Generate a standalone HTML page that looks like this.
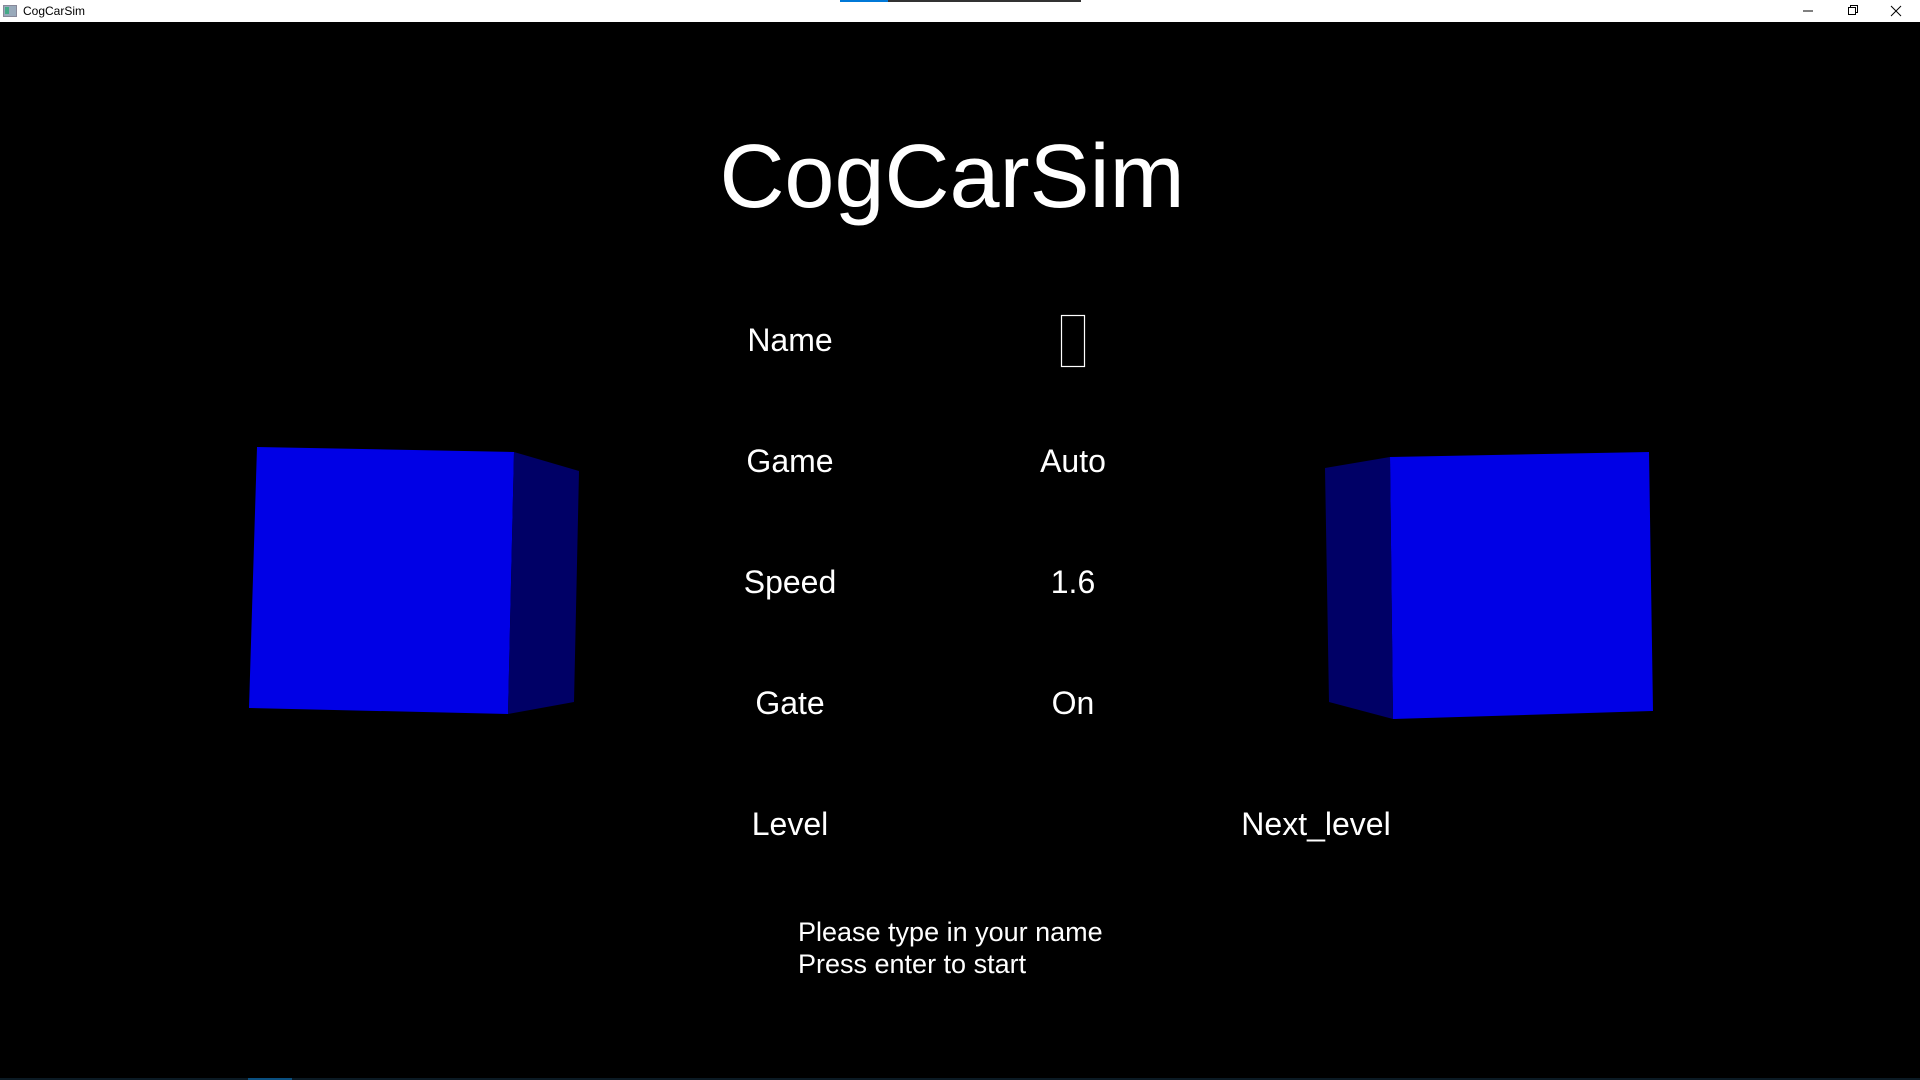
<!DOCTYPE html>
<html><head><meta charset="utf-8">
<style>
html,body{margin:0;padding:0;width:1920px;height:1080px;background:#000;overflow:hidden;font-family:"Liberation Sans",Arial,sans-serif;}
#tb{position:absolute;left:0;top:0;width:1920px;height:22px;background:#fff;}
#tb .t{position:absolute;left:23px;top:4px;font-size:12px;color:#000;line-height:14px;}
.w{position:absolute;color:#fff;white-space:nowrap;line-height:1;}
.c{transform:translateX(-50%);}
.l{font-size:32px;}
</style></head><body>
<div id="tb">
  <div style="position:absolute;left:3px;top:5px;width:12px;height:10px;background:#9ab;border:1px solid #889;"></div>
  <div style="position:absolute;left:5px;top:7px;width:4px;height:7px;background:#4a8;"></div>
  <div class="t">CogCarSim</div>
  <div style="position:absolute;left:840px;top:0;width:48px;height:2px;background:#0078d7"></div>
  <div style="position:absolute;left:888px;top:0;width:193px;height:2px;background:#333"></div>
  <svg style="position:absolute;left:1790px;top:0" width="130" height="22">
    <line x1="13" y1="11" x2="23" y2="11" stroke="#000" stroke-width="1"/>
    <rect x="58.5" y="7.5" width="7" height="7" fill="none" stroke="#000"/>
    <polyline points="60.5,7.5 60.5,5.5 67.5,5.5 67.5,12.5 65.5,12.5" fill="none" stroke="#000"/>
    <line x1="101" y1="6" x2="111" y2="16" stroke="#000"/>
    <line x1="111" y1="6" x2="101" y2="16" stroke="#000"/>
  </svg>
</div>

<svg style="position:absolute;left:0;top:0" width="1920" height="1080">
  <polygon points="257,447 514,452 508,714 249,708" fill="#0000e6"/>
  <polygon points="514,452 579,471 574,702 508,714" fill="#000066"/>
  <polygon points="1390,457 1649,452 1653,711 1393,719" fill="#0000e6"/>
  <polygon points="1325,468 1390,457 1393,719 1329,702" fill="#000066"/>
  <rect x="1061.5" y="315.5" width="23" height="51" fill="none" stroke="#fff" stroke-width="1.2"/>
  <rect x="0" y="1078" width="1920" height="2" fill="#0b1a24"/>
  <rect x="248" y="1078" width="44" height="2" fill="#0a4f80"/>
</svg>

<div class="w c" style="left:952px;top:132px;font-size:90px;">CogCarSim</div>

<div class="w c l" style="left:790px;top:324px;">Name</div>
<div class="w c l" style="left:790px;top:445px;">Game</div>
<div class="w c l" style="left:790px;top:566px;">Speed</div>
<div class="w c l" style="left:790px;top:687px;">Gate</div>
<div class="w c l" style="left:790px;top:808px;">Level</div>

<div class="w c l" style="left:1073px;top:445px;">Auto</div>
<div class="w c l" style="left:1073px;top:566px;">1.6</div>
<div class="w c l" style="left:1073px;top:687px;">On</div>
<div class="w c l" style="left:1316px;top:808px;">Next_level</div>

<div class="w" style="left:798px;top:916px;font-size:27px;line-height:32px;">Please type in your name<br>Press enter to start</div>
</body></html>
